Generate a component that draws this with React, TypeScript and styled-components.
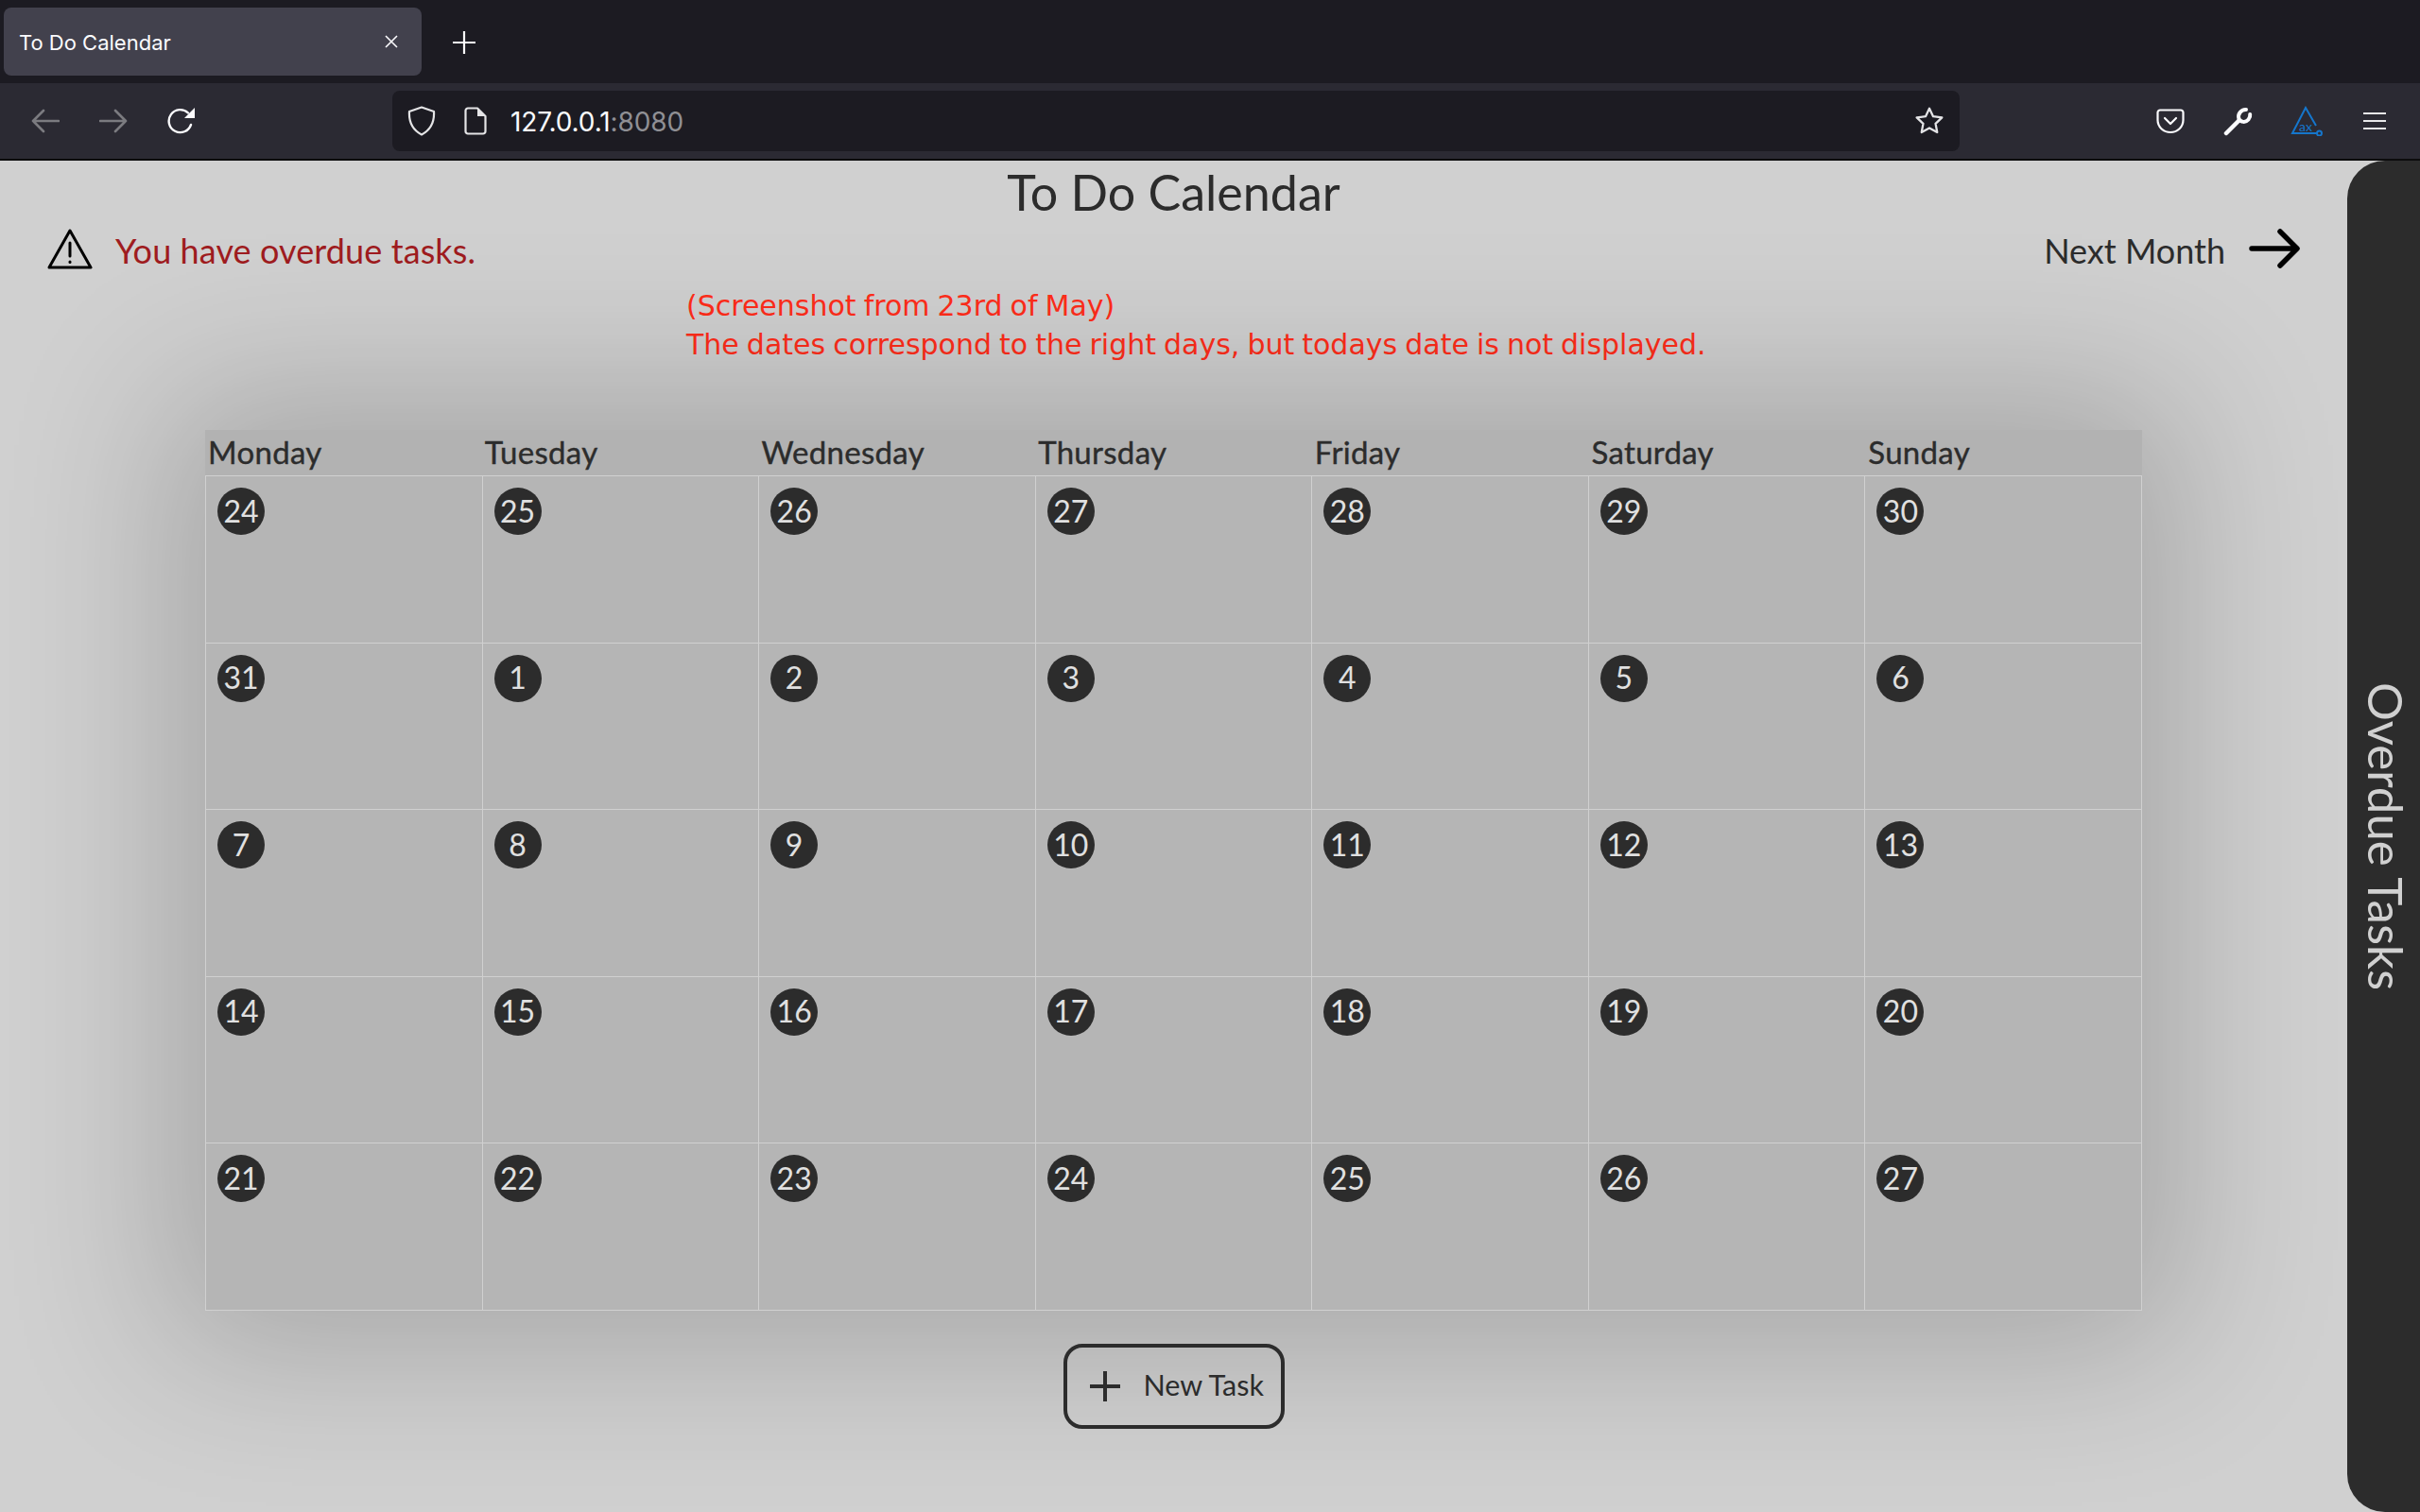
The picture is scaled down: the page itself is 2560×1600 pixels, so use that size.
import React from "react";
import styled, { createGlobalStyle } from "styled-components";

const GlobalStyle = createGlobalStyle`
  html, body {
    margin: 0;
    padding: 0;
    background: #d0d0d0;
    overflow: hidden;
  }
  * {
    box-sizing: border-box;
  }
`;

const DAYS = ["Monday", "Tuesday", "Wednesday", "Thursday", "Friday", "Saturday", "Sunday"];
const DATES = [
  24, 25, 26, 27, 28, 29, 30,
  31, 1, 2, 3, 4, 5, 6,
  7, 8, 9, 10, 11, 12, 13,
  14, 15, 16, 17, 18, 19, 20,
  21, 22, 23, 24, 25, 26, 27,
];

const Window = styled.div`
  width: 2560px;
  height: 1600px;
  display: flex;
  flex-direction: column;
  font-family: Lato, "Open Sans", sans-serif;
`;

const TabStrip = styled.div`
  height: 88px;
  background: #1c1b22;
  display: flex;
  align-items: center;
  padding-left: 4px;
`;

const Tab = styled.div`
  width: 442px;
  height: 72px;
  background: #42414d;
  border-radius: 8px;
  display: flex;
  align-items: center;
  justify-content: space-between;
  padding: 0 24px 0 16px;
  color: #fbfbfe;
  font-family: Inter, sans-serif;
  font-size: 22px;
`;

const TabTitle = styled.span`
  margin-top: 2px;
`;

const NewTabButton = styled.div`
  width: 44px;
  height: 44px;
  margin: 2px 0 0 23px;
  display: flex;
  align-items: center;
  justify-content: center;
`;

const Toolbar = styled.div`
  height: 82px;
  background: #2b2a33;
  border-bottom: 2px solid #0c0c0d;
  display: flex;
  align-items: flex-start;
  padding: 8px 26px 0 26px;
`;

const NavGroup = styled.div`
  display: flex;
  gap: 28px;
  height: 64px;
  align-items: center;
`;

const RightGroup = styled(NavGroup)`
  margin-left: auto;
`;

const ToolButton = styled.div`
  width: 44px;
  height: 44px;
  display: flex;
  align-items: center;
  justify-content: center;
`;

const UrlBar = styled.div`
  width: 1658px;
  height: 64px;
  margin-left: 201px;
  background: #1c1b22;
  border-radius: 8px;
  display: flex;
  align-items: center;
  padding: 0 16px;
`;

const PageIcon = styled.svg`
  margin-left: 30px;
`;

const Url = styled.div`
  margin: 2px 0 0 25px;
  flex: 1;
  color: #fbfbfe;
  font-family: Inter, sans-serif;
  font-size: 28px;
  letter-spacing: -0.1px;
`;

const UrlPort = styled.span`
  color: #8f8f94;
`;

const Page = styled.div`
  flex: 1;
  display: flex;
  min-height: 0;
  background: #d0d0d0;
`;

const Main = styled.main`
  flex: 1;
  min-width: 0;
  display: flex;
  flex-direction: column;
`;

const Title = styled.h1`
  margin: 0;
  height: 70px;
  line-height: 67px;
  text-align: center;
  font-size: 52px;
  font-weight: 400;
  color: #2c2c2c;
`;

const TopRow = styled.div`
  height: 46px;
  display: flex;
  align-items: center;
  justify-content: space-between;
  padding: 0 50px;
`;

const Alert = styled.div`
  display: flex;
  align-items: center;
  gap: 24px;
  color: #9f1c20;
  font-size: 36px;
  letter-spacing: 0.1px;
`;

const RowText = styled.span`
  margin-top: 3px;
`;

const NextMonth = styled.div`
  display: flex;
  align-items: center;
  gap: 25px;
  color: #2c2c2c;
  font-size: 36px;
`;

const Note = styled.div`
  margin: 17px 0 0 726px;
  color: #ff2d1a;
  font-family: "DejaVu Sans", sans-serif;
  font-size: 30px;
  word-spacing: -1.5px;
  line-height: 41px;
`;

const Calendar = styled.div`
  margin: 70px auto 0;
  width: 2049px;
  background: #b5b5b5;
  box-shadow: 0 0 160px 40px rgba(0, 0, 0, 0.2);
`;

const DayRow = styled.div`
  height: 48px;
  display: grid;
  grid-template-columns: repeat(7, 1fr);
  background: #b2b2b2;
`;

const DayName = styled.div`
  padding: 3px 0 0 3px;
  color: #2c2c2c;
  font-size: 33px;
  letter-spacing: 0.3px;
  -webkit-text-stroke: 0.4px #2c2c2c;
  line-height: 40px;
`;

const Cells = styled.div`
  display: grid;
  grid-template-columns: repeat(7, 1fr);
  grid-auto-rows: 176.6px;
  border-right: 1px solid #d0d0d0;
  border-bottom: 1px solid #d0d0d0;
`;

const Cell = styled.div`
  border-top: 1px solid #d0d0d0;
  border-left: 1px solid #d0d0d0;
  padding: 12px 0 0 12px;
`;

const DateBadge = styled.div`
  width: 50px;
  height: 50px;
  border-radius: 50%;
  background: #2c2c2c;
  color: #e0e0e0;
  display: flex;
  align-items: center;
  justify-content: center;
  font-size: 32px;
  padding-bottom: 2px;
`;

const NewTask = styled.button`
  align-self: center;
  margin-top: 35px;
  width: 234px;
  height: 90px;
  border: 4px solid #2c2c2c;
  border-radius: 20px;
  background: transparent;
  display: flex;
  align-items: center;
  gap: 25px;
  padding: 0 0 0 24px;
  color: #2c2c2c;
  font-family: Lato, sans-serif;
  font-size: 30.5px;
`;

const NewTaskLabel = styled.span`
  margin-bottom: 3px;
`;

const OverduePanel = styled.aside`
  width: 77px;
  background: #2c2c2c;
  border-radius: 40px 0 0 40px;
  display: flex;
  align-items: center;
  justify-content: center;
  padding-left: 6px;
`;

const OverdueLabel = styled.div`
  writing-mode: vertical-rl;
  color: #d0d0d0;
  font-size: 51px;
  font-weight: 400;
`;

const App = () => {
  return (
    <Window>
      <GlobalStyle />
      <TabStrip>
        <Tab>
          <TabTitle>To Do Calendar</TabTitle>
          <svg width="16" height="16" viewBox="0 0 16 16" fill="none" stroke="#fbfbfe" strokeWidth="1.6">
            <path d="M2 2l12 12M14 2L2 14" />
          </svg>
        </Tab>
        <NewTabButton>
          <svg width="24" height="24" viewBox="0 0 24 24" fill="none" stroke="#fbfbfe" strokeWidth="2.2">
            <path d="M12 0v24M0 12h24" />
          </svg>
        </NewTabButton>
      </TabStrip>

      <Toolbar>
        <NavGroup>
          <ToolButton>
            <svg width="30" height="26" viewBox="0 0 30 26" fill="none" stroke="#7b7b80" strokeWidth="2.6" strokeLinecap="round" strokeLinejoin="round">
              <path d="M29 13H2M13 2L2 13l11 11" />
            </svg>
          </ToolButton>
          <ToolButton>
            <svg width="30" height="26" viewBox="0 0 30 26" fill="none" stroke="#7b7b80" strokeWidth="2.6" strokeLinecap="round" strokeLinejoin="round">
              <path d="M1 13h27M17 2l11 11-11 11" />
            </svg>
          </ToolButton>
          <ToolButton>
            <svg width="30" height="30" viewBox="0 0 30 30" fill="none">
              <path d="M25 19a12 12 0 1 1-3-12.500" stroke="#fbfbfe" strokeWidth="2.4" strokeLinecap="round" />
              <path d="M29 1v11H18z" fill="#fbfbfe" />
            </svg>
          </ToolButton>
        </NavGroup>

        <UrlBar>
          <svg width="30" height="32" viewBox="0 0 30 32" fill="none" stroke="#e4e4e6" strokeWidth="2.2" strokeLinejoin="round">
            <path d="M15 1.500L28 6c.6 10-2.500 19-13 24.500C4.500 25 1.400 16 2 6z" />
          </svg>
          <PageIcon width="24" height="30" viewBox="0 0 24 30" fill="none">
            <path d="M14 1.500H4a2.500 2.500 0 0 0-2.500 2.500v22A2.500 2.500 0 0 0 4 28.500h16a2.500 2.500 0 0 0 2.500-2.500V10z" stroke="#e4e4e6" strokeWidth="2.2" strokeLinejoin="round" />
            <path d="M14 1.500V10h8.500z" fill="#e4e4e6" />
          </PageIcon>
          <Url>
            127.0.0.1<UrlPort>:8080</UrlPort>
          </Url>
          <svg width="32" height="32" viewBox="0 0 24 24" fill="none" stroke="#e4e4e6" strokeWidth="1.7" strokeLinejoin="round">
            <path d="M12 2l3 6.400 7 .9-5.100 4.800 1.300 6.900L12 17.600 5.800 21l1.300-6.900L2 9.300l7-.9z" />
          </svg>
        </UrlBar>

        <RightGroup>
          <ToolButton>
            <svg width="30" height="27" viewBox="0 0 30 27" fill="none" stroke="#fbfbfe" strokeWidth="2.2" strokeLinecap="round" strokeLinejoin="round">
              <path d="M4 1.500h22A2.500 2.500 0 0 1 28.500 4v8a13.500 13 0 0 1-27 0V4A2.500 2.500 0 0 1 4 1.500z" />
              <path d="M9 10l6 6 6-6" />
            </svg>
          </ToolButton>
          <ToolButton>
            <svg width="32" height="32" viewBox="0 0 32 32" fill="none" stroke="#fbfbfe" strokeLinecap="round">
              <path d="M3 29L16 16" strokeWidth="4.500" />
              <path d="M24 4A7.500 7.500 0 0 0 16.500 14c2 3.500 7 4 10 .5 1.300-1.500 2-3.500 1.700-5.500" strokeWidth="4" />
            </svg>
          </ToolButton>
          <ToolButton>
            <svg width="36" height="32" viewBox="0 0 36 32" fill="none" stroke="#1576cc" strokeWidth="2">
              <path d="M28 21L17 2 3 29h26" />
              <circle cx="31.500" cy="29" r="2.500" />
              <text x="17" y="27" textAnchor="middle" fill="#1576cc" stroke="none" fontFamily="Lato, sans-serif" fontSize="14">
                ax
              </text>
            </svg>
          </ToolButton>
          <ToolButton>
            <svg width="24" height="18" viewBox="0 0 24 18" fill="#e8e8ea">
              <rect y="0" width="24" height="2" />
              <rect y="8" width="24" height="2" />
              <rect y="16" width="24" height="2" />
            </svg>
          </ToolButton>
        </RightGroup>
      </Toolbar>

      <Page>
        <Main>
          <Title>To Do Calendar</Title>
          <TopRow>
            <Alert>
              <svg width="48" height="43" viewBox="0 0 48 43" fill="none" stroke="#000" strokeWidth="3" strokeLinecap="round" strokeLinejoin="round">
                <path d="M24 2L46 41H2z" />
                <path d="M24 15v14" />
                <path d="M24 35v.5" />
              </svg>
              <RowText>You have overdue tasks.</RowText>
            </Alert>
            <NextMonth>
              <RowText>Next Month</RowText>
              <svg width="54" height="42" viewBox="0 0 54 42" fill="none" stroke="#000" strokeWidth="5.500" strokeLinecap="round" strokeLinejoin="round">
                <path d="M3 21h47M33 3l18 18-18 18" />
              </svg>
            </NextMonth>
          </TopRow>
          <Note>
            (Screenshot from 23rd of May)
            <br />
            The dates correspond to the right days, but todays date is not displayed.
          </Note>
          <Calendar>
            <DayRow>
              {DAYS.map((day) => (
                <DayName key={day}>{day}</DayName>
              ))}
            </DayRow>
            <Cells>
              {DATES.map((date, i) => (
                <Cell key={i}>
                  <DateBadge>{date}</DateBadge>
                </Cell>
              ))}
            </Cells>
          </Calendar>
          <NewTask>
            <svg width="32" height="32" viewBox="0 0 32 32" fill="none" stroke="#2c2c2c" strokeWidth="4">
              <path d="M16 0v32M0 16h32" />
            </svg>
            <NewTaskLabel>New Task</NewTaskLabel>
          </NewTask>
        </Main>
        <OverduePanel>
          <OverdueLabel>Overdue Tasks</OverdueLabel>
        </OverduePanel>
      </Page>
    </Window>
  );
};

export default App;
